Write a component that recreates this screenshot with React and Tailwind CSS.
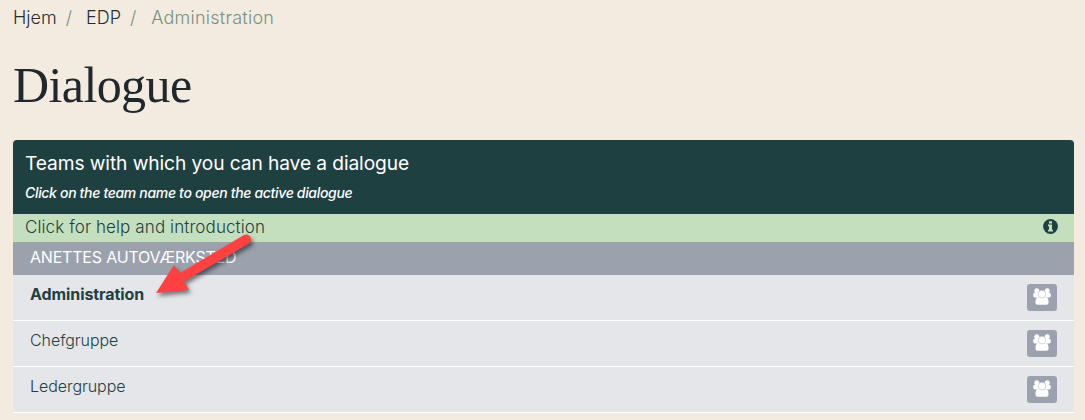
import React from "react";

function UsersIcon() {
  return (
    <svg viewBox="0 0 18 17" className="h-[17px] w-[18px]" fill="currentColor">
      <circle cx="3.8" cy="2.7" r="2.5" />
      <circle cx="14.2" cy="2.7" r="2.5" />
      <rect x="0.2" y="4.8" width="6.4" height="4.7" rx="1.8" />
      <rect x="11.4" y="4.8" width="6.4" height="4.7" rx="1.8" />
      <path d="M2.5 13.5C2.5 10.5 3.6 8.9 6 8.9h6c2.4 0 3.5 1.6 3.5 4.600v1.200c0 1.200-.9 2-2.100 2H4.600c-1.200 0-2.100-.8-2.100-2Z" />
      <circle cx="9" cy="6.1" r="3.9" stroke="#a9aeb9" strokeWidth="0.5" />
    </svg>
  );
}

function InfoIcon() {
  return (
    <svg viewBox="0 0 15 15" className="mb-[3px] size-[15px]">
      <circle cx="7.5" cy="7.5" r="7.4" fill="#1f4041" />
      <path d="M6 2.2h3v2.3H6ZM5 5.5h4v5.2h1v1.8H5v-1.8h1V7.3H5Z" fill="#c4dfbd" />
    </svg>
  );
}

function Row({ name, active }) {
  return (
    <div className="flex h-[46px] items-start justify-between border-b border-white bg-[#e5e6ea] pl-[17px] pr-[17px] text-[#1f4041]">
      <span className={active ? "pt-[7px] text-[16px] leading-6 font-bold tracking-[-0.08px]" : "pt-[7px] text-[16px] leading-6 font-light tracking-[-0.05px]"}>{name}</span>
      <button className="mt-[9px] flex h-[27px] w-[30px] items-start justify-center rounded-[3px] bg-[#9ca1ae] pt-[4px] text-white">
        <UsersIcon />
      </button>
    </div>
  );
}

export default function App() {
  return (
    <div className="relative h-[420px] w-[1085px] overflow-hidden bg-[#f4ebe0] pl-[13px] pr-[11px] font-['Inter',sans-serif]">
      <nav className="flex h-[36px] items-center text-[18px] leading-[36px] font-light text-[#1f2f37]">
        <span>Hjem</span>
        <span className="ml-[9px] text-[#75907f]">/</span>
        <span className="ml-[14px]">EDP</span>
        <span className="ml-[9px] text-[#75907f]">/</span>
        <span className="ml-[15px] tracking-[0.25px] text-[#75907f]">Administration</span>
      </nav>
      <h1 className="h-[104px] pt-[20px] font-['Liberation_Serif',serif] text-[50px] leading-[58px] tracking-[-0.6px] text-[#20272d]">Dialogue</h1>
      <section>
        <header className="h-[74px] rounded-t-[4px] bg-[#1f4041] pl-[12px] pt-[9px] text-white">
          <h2 className="text-[19.2px] leading-[28px] font-normal tracking-[-0.1px]">Teams with which you can have a dialogue</h2>
          <p className="mt-[6px] text-[14px] leading-[20px] font-medium tracking-[-0.33px] italic">Click on the team name to open the active dialogue</p>
        </header>
        <div className="flex h-[28px] items-center justify-between bg-[#c4dfbd] pl-[12px] pr-[16px] text-[#1f4041]">
          <span className="pb-[2px] text-[17px] leading-[26px] font-light tracking-[0.1px]">Click for help and introduction</span>
          <InfoIcon />
        </div>
        <div className="h-[33px] bg-[#9ca1ae] pl-[17px] text-[16px] leading-[31px] tracking-[-0.2px] text-white">ANETTES AUTOVÆRKSTED</div>
        <Row name="Administration" active />
        <Row name="Chefgruppe" />
        <Row name="Ledergruppe" />
      </section>
      <svg viewBox="0 0 110 80" className="pointer-events-none absolute left-[150px] top-[230px] h-[80px] w-[110px] drop-shadow-[2px_3px_2px_rgba(0,0,0,0.5)]">
        <path d="M6 63 24 35 30 43 94 5C99 2.5 104 9.5 99 13.5L34 51.5 39 60Z" fill="#ff4141" />
      </svg>
    </div>
  );
}
